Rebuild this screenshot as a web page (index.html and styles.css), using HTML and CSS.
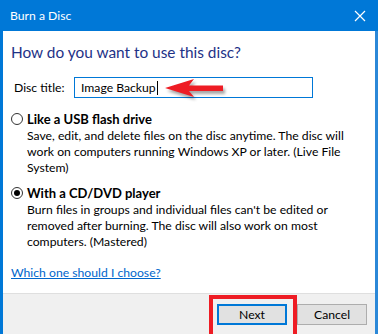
FILE: index.html
```html
<!DOCTYPE html>
<html>
<head>
<meta charset="utf-8">
<link rel="stylesheet" href="styles.css">
</head>
<body>
<div class="window">
  <div class="titlebar">
    <span class="title">Burn a Disc</span>
    <svg class="close" width="12" height="12" viewBox="0 0 12 12"><path d="M1 1L11 11M11 1L1 11" stroke="#fff" stroke-width="1.2"/></svg>
  </div>
  <div class="frame">
    <div class="content">
      <h1 class="heading">How do you want to use this disc?</h1>
      <div class="title-row">
        <label class="title-label">Disc title:</label>
        <div class="input"><span>Image Backup</span><span class="caret"></span></div>
      </div>
      <div class="option">
        <div class="opt-head"><span class="radio"></span><span class="opt-label">Like a USB flash drive</span></div>
        <p class="opt-desc">Save, edit, and delete files on the disc anytime. The disc will work on computers running Windows XP or later. (Live File System)</p>
      </div>
      <div class="option">
        <div class="opt-head"><span class="radio checked"></span><span class="opt-label">With a CD/DVD player</span></div>
        <p class="opt-desc">Burn files in groups and individual files can't be edited or removed after burning. The disc will also work on most computers. (Mastered)</p>
      </div>
      <a class="help" href="#">Which one should I choose?</a>
    </div>
    <div class="footer">
      <div class="highlight"><button class="btn primary">Next</button></div>
      <button class="btn">Cancel</button>
    </div>
  </div>
  <svg class="arrow" width="70" height="26" viewBox="0 0 70 26">
    <defs><filter id="sh" x="-20%" y="-30%" width="150%" height="180%"><feGaussianBlur stdDeviation="1.5"/></filter></defs>
    <polygon points="2,10 31,1 26,7.5 60,7.5 60,13 26,13 31,19" fill="#000" opacity="0.35" filter="url(#sh)" transform="translate(2,3)"/>
    <polygon points="2,10 31,1 26,7.5 60,7.5 60,13 26,13 31,19" fill="#ee1c24"/>
  </svg>
</div>
</body>
</html>
```
FILE: styles.css
```css
* { box-sizing: border-box; }
html, body { margin: 0; padding: 0; }
body { width: 378px; height: 334px; overflow: hidden; background: #fff; font-family: Lato, "Liberation Sans", sans-serif; font-size: 12.2px; color: #000; }
.window { position: relative; width: 378px; height: 334px; display: flex; flex-direction: column; }
.titlebar { height: 31px; background: #0078d7; display: flex; align-items: center; justify-content: space-between; padding: 0 12px 0 10px; flex: none; }
.title { color: #fff; font-size: 12.2px; }
.close { display: block; }
.frame { flex: 1; display: flex; flex-direction: column; border-left: 3px solid #0078d7; border-right: 3px solid #2b88d8; }
.content { height: 263px; flex: none; padding: 10px 8px 0 8px; background: #fff; border-bottom: 1px solid #dfdfdf; }
.heading { margin: 0; font-weight: normal; font-size: 15.4px; color: #1e3287; line-height: 22px; }
.title-row { display: flex; align-items: center; margin-top: 14px; }
.title-label { width: 63px; padding-left: 3px; }
.input { width: 239px; height: 21px; border: 1px solid #0078d7; padding-left: 6px; display: flex; align-items: center; }
.caret { display: inline-block; width: 1px; height: 14px; background: #000; margin-left: 1px; }
.option { margin-top: 13px; }
.option + .option { margin-top: 9px; }
.opt-head { display: flex; align-items: center; height: 16px; }
.radio { width: 12px; height: 12px; border: 1px solid #333; border-radius: 50%; margin-right: 4px; position: relative; flex: none; }
.radio.checked::after { content: ""; position: absolute; left: 2px; top: 2px; width: 6px; height: 6px; border-radius: 50%; background: #000; }
.opt-label { font-weight: bold; font-size: 13px; }
.opt-desc { margin: 1px 0 0 16px; line-height: 16px; width: 320px; color: #000; }
.help { display: inline-block; margin-top: 15px; color: #0066cc; }
.footer { flex: 1; background: #f0f0f0; display: flex; justify-content: flex-end; align-items: flex-start; padding: 0 8px 0 0; }
.highlight { border: 4px solid #ee1c24; border-bottom: none; padding: 0 6px 0 4px; height: 40px; margin-top: 1px; }
.btn { width: 70px; height: 21px; font-family: inherit; font-size: 12.2px; background: #e1e1e1; border: 1px solid #adadad; padding: 0; margin: 10px 0 0 0; }
.highlight .btn { margin: 5px 0 0 0; }
.btn.primary { border: 2px solid #0078d7; }
.arrow { position: absolute; left: 163px; top: 78px; }
```
